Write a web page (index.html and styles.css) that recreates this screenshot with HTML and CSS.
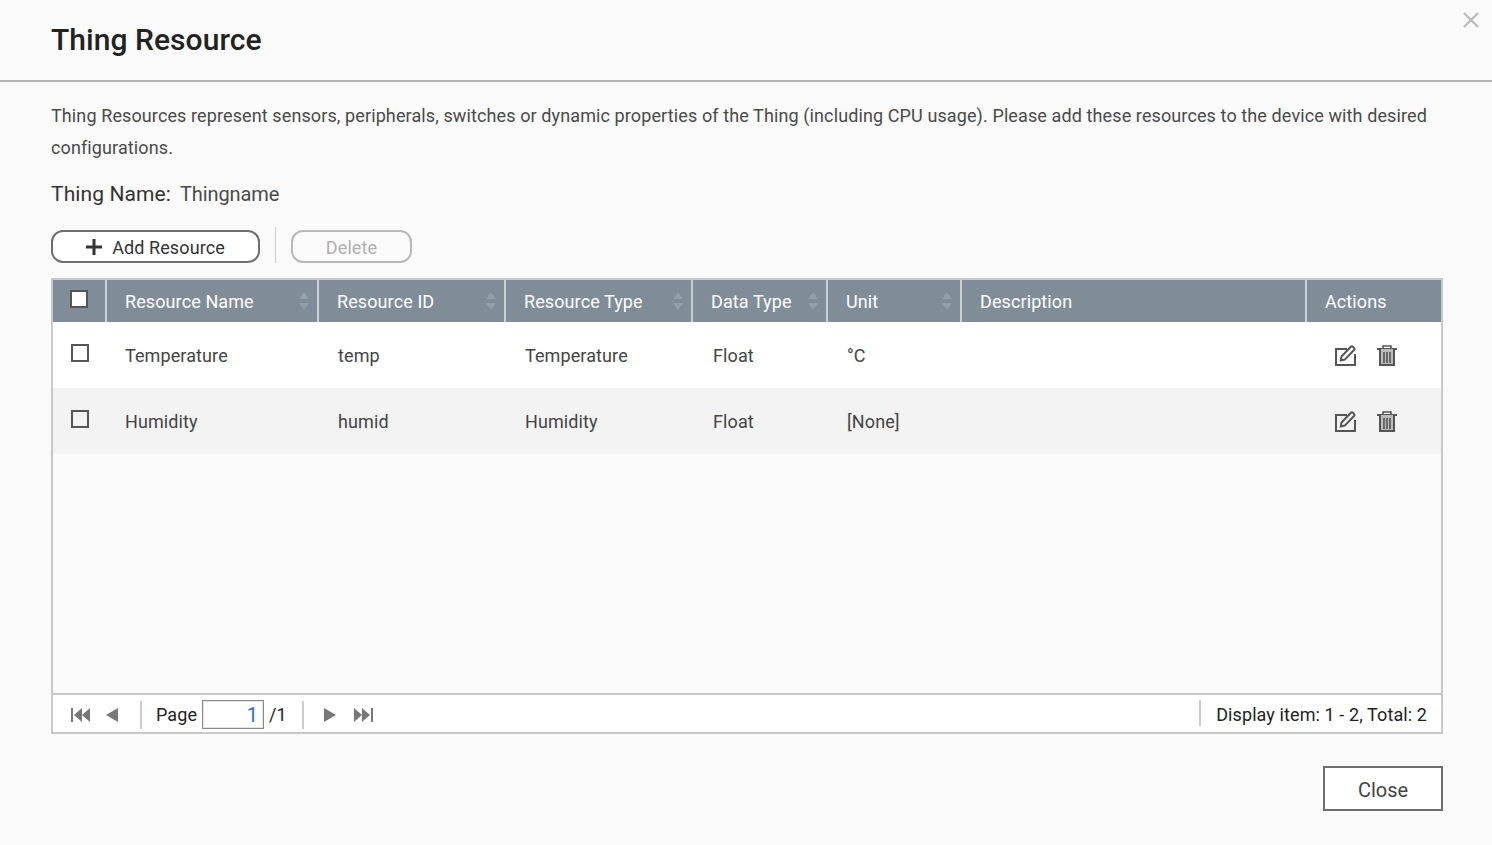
FILE: index.html
```html
<!DOCTYPE html>
<html lang="en">
<head>
<meta charset="utf-8">
<title>Thing Resource</title>
<link rel="stylesheet" href="styles.css">
</head>
<body>
<svg width="0" height="0" class="defs">
  <symbol id="i-edit" viewBox="0 0 21 21">
    <path d="M12 4H1v16h19V9" fill="none" stroke="#555" stroke-width="2"/>
    <path d="M6.500 11.500 15.800 1.800a1.500 1.500 0 0 1 2.100 0l1.100 1.100a1.500 1.500 0 0 1 0 2.100L9.800 14.600l-4 .8z" fill="none" stroke="#555" stroke-width="2"/>
  </symbol>
  <symbol id="i-trash" viewBox="0 0 20 21">
    <path d="M0 4h20" stroke="#555" stroke-width="2"/>
    <path d="M6 4V1h8v3" fill="none" stroke="#555" stroke-width="1.600"/>
    <path d="M3 4v16h14V4" fill="#bbb" stroke="#555" stroke-width="2"/>
    <path d="M7 7v11M10 7v11M13 7v11" stroke="#555" stroke-width="1.600"/>
  </symbol>
  <symbol id="i-up" viewBox="0 0 10 7"><path d="M5 0l5 7H0z" fill="#939fa9"/></symbol>
  <symbol id="i-down" viewBox="0 0 10 7"><path d="M0 0h10L5 7z" fill="#939fa9"/></symbol>
</svg>
<main class="dialog">
  <header class="head">
    <h1 class="title">Thing Resource</h1>
    <svg class="close-x" width="18" height="18" viewBox="0 0 18 18"><path d="M2 2l14 14M16 2L2 16" stroke="#bbb" stroke-width="2.400"/></svg>
  </header>
  <section class="content">
    <p class="intro">Thing Resources represent sensors, peripherals, switches or dynamic properties of the Thing (including CPU usage). Please add these resources to the device with desired configurations.</p>
    <div class="name-line"><span class="name-label">Thing Name:</span><span class="name-value">Thingname</span></div>
    <div class="toolbar">
      <button class="pill pill-add" type="button">
        <svg width="16" height="16" viewBox="0 0 16 16"><path d="M8 0v16M0 8h16" stroke="#333" stroke-width="3"/></svg>
        <span>Add Resource</span>
      </button>
      <span class="tool-sep"></span>
      <button class="pill pill-off" type="button">Delete</button>
    </div>
    <div class="grid-box">
      <div class="row row-head">
        <div class="cell cell-check"><span class="check check-head"></span></div>
        <div class="cell"><span>Resource Name</span><span class="sort"><svg width="10" height="7"><use href="#i-up"/></svg><svg width="10" height="7"><use href="#i-down"/></svg></span></div>
        <div class="cell"><span>Resource ID</span><span class="sort"><svg width="10" height="7"><use href="#i-up"/></svg><svg width="10" height="7"><use href="#i-down"/></svg></span></div>
        <div class="cell"><span>Resource Type</span><span class="sort"><svg width="10" height="7"><use href="#i-up"/></svg><svg width="10" height="7"><use href="#i-down"/></svg></span></div>
        <div class="cell"><span>Data Type</span><span class="sort"><svg width="10" height="7"><use href="#i-up"/></svg><svg width="10" height="7"><use href="#i-down"/></svg></span></div>
        <div class="cell"><span>Unit</span><span class="sort"><svg width="10" height="7"><use href="#i-up"/></svg><svg width="10" height="7"><use href="#i-down"/></svg></span></div>
        <div class="cell"><span>Description</span></div>
        <div class="cell cell-last"><span>Actions</span></div>
      </div>
      <div class="row row-body">
        <div class="cell cell-check"><span class="check"></span></div>
        <div class="cell">Temperature</div>
        <div class="cell">temp</div>
        <div class="cell">Temperature</div>
        <div class="cell">Float</div>
        <div class="cell">°C</div>
        <div class="cell"></div>
        <div class="cell cell-actions"><svg width="21" height="21"><use href="#i-edit"/></svg><svg width="20" height="21"><use href="#i-trash"/></svg></div>
      </div>
      <div class="row row-body row-alt">
        <div class="cell cell-check"><span class="check"></span></div>
        <div class="cell">Humidity</div>
        <div class="cell">humid</div>
        <div class="cell">Humidity</div>
        <div class="cell">Float</div>
        <div class="cell">[None]</div>
        <div class="cell"></div>
        <div class="cell cell-actions"><svg width="21" height="21"><use href="#i-edit"/></svg><svg width="20" height="21"><use href="#i-trash"/></svg></div>
      </div>
      <div class="grid-fill"></div>
      <footer class="pager">
        <svg class="pg-first" width="19" height="14" viewBox="0 0 19 14"><path d="M1 0v14" stroke="#777" stroke-width="2"/><path d="M11 0v14L3 7zM19 0v14l-8-7z" fill="#777"/></svg>
        <svg class="pg-prev" width="12" height="14" viewBox="0 0 12 14"><path d="M12 0v14L0 7z" fill="#777"/></svg>
        <span class="pg-sep pg-sep-a"></span>
        <span class="pg-label">Page</span>
        <span class="pg-input">1</span>
        <span class="pg-total">/1</span>
        <span class="pg-sep pg-sep-b"></span>
        <svg class="pg-next" width="12" height="14" viewBox="0 0 12 14"><path d="M0 0v14l12-7z" fill="#777"/></svg>
        <svg class="pg-last" width="19" height="14" viewBox="0 0 19 14"><path d="M18 0v14" stroke="#777" stroke-width="2"/><path d="M0 0v14l8-7zM8 0v14l8-7z" fill="#777"/></svg>
        <span class="pg-info">Display item: 1 - 2, Total: 2</span>
      </footer>
    </div>
    <div class="actions-bar"><button class="btn-close" type="button">Close</button></div>
  </section>
</main>
</body>
</html>
```
FILE: styles.css
```css
* { box-sizing: border-box; }
html, body { margin: 0; height: 100%; }
body {
  background: #fafafa;
  color: #333;
  font-family: Roboto, "Liberation Sans", sans-serif;
  font-size: 18px;
  letter-spacing: .1px;
  overflow: hidden;
}
.defs { position: absolute; }
.dialog { width: 1492px; height: 845px; display: flex; flex-direction: column; }
.head {
  position: relative;
  height: 82px;
  padding: 22px 51px 0;
  border-bottom: 2px solid #b3b3b3;
}
.title { margin: 0; font-size: 30px; line-height: 36px; font-weight: 500; color: #222; letter-spacing: .05px; }
.close-x { position: absolute; top: 11px; right: 12px; }
.content { padding: 18px 49px 0 51px; flex: 1; display: flex; flex-direction: column; }
.intro { margin: 0; font-size: 18px; line-height: 32px; color: #4a4a4a; width: 1392px; letter-spacing: .11px; }
.name-line { margin-top: 15px; height: 31px; line-height: 31px; font-size: 20px; color: #333; display: flex; }
.name-label { font-size: 21px; }
.name-value { margin-left: 9px; color: #4a4a4a; letter-spacing: -.1px; }
.toolbar { margin-top: 17px; height: 36px; display: flex; align-items: flex-start; }
.pill {
  height: 33px;
  margin-top: 3px;
  border-radius: 12px;
  background: #fff;
  font: 18px/1 Roboto, "Liberation Sans", sans-serif;
  letter-spacing: .1px;
  padding: 2px 0 0;
  display: flex;
  align-items: center;
  justify-content: center;
}
.pill-add { width: 209px; border: 2px solid #6e6e6e; color: #333; gap: 10px; }
.pill-add svg { margin-top: -2px; }
.pill-off { width: 121px; border: 2px solid #b8b8b8; color: #b0b0b0; background: #fafafa; }
.tool-sep { width: 1px; height: 36px; background: #ccc; margin: 0 15px; }
.grid-box {
  margin-top: 15px;
  width: 1392px;
  height: 456px;
  border: 2px solid #c8c8c8;
  display: flex;
  flex-direction: column;
}
.row { display: grid; grid-template-columns: 54px 212px 187px 187px 135px 134px 345px 134px; }
.row-head { height: 42px; background: #808d99; color: #fff; }
.row-head .cell { border-right: 2px solid #c8d0d6; padding: 0 8px 0 18px; justify-content: space-between; }
.row-head .cell-last { border-right: 0; }
.row-head .cell-check { padding: 0 0 4px 17px; justify-content: flex-start; }
.cell { display: flex; align-items: center; min-width: 0; }
.row-body { height: 66px; background: #fff; color: #444; }
.row-body .cell { padding-left: 19px; }
.row-body .cell:nth-child(2) { padding-left: 18px; }
.row-body .cell:nth-child(5) { padding-left: 20px; }
.row-body .cell-check { padding: 0 0 4px 18px; }
.row-alt { background: #f3f3f3; }
.row-body .cell-actions { padding-left: 28px; gap: 21px; }
.check { width: 18px; height: 18px; border: 2px solid #555; background: #fff; display: block; }
.row-body .check { background: transparent; }
.sort { display: flex; flex-direction: column; gap: 4px; }
.sort svg { display: block; }
.grid-fill { flex: 1; }
.pager {
  height: 39px;
  padding-top: 2px;
  border-top: 2px solid #c8c8c8;
  background: #fff;
  display: flex;
  align-items: center;
  color: #222;
}
.pg-first { margin-left: 18px; }
.pg-prev { margin-left: 16px; }
.pg-sep { width: 2px; height: 28px; background: #ccc; }
.pg-sep-a { margin-left: 22px; }
.pg-label { margin-left: 14px; }
.pg-input {
  margin-left: 5px;
  width: 62px;
  height: 29px;
  border: 1px solid #888;
  box-shadow: inset 0 0 0 1px #e4e4e4;
  text-align: right;
  padding-right: 5px;
  font-size: 20px;
  line-height: 29px;
  color: #2a6fd0;
}
.pg-total { margin-left: 5px; width: 33px; letter-spacing: 0; }
.pg-next { margin-left: 20px; }
.pg-last { margin-left: 18px; }
.pg-info {
  margin-left: auto;
  margin-right: 14px;
  margin-bottom: 4px;
  padding-left: 15px;
  border-left: 2px solid #ccc;
  height: 26px;
  line-height: 30px;
}
.actions-bar { width: 1392px; margin-top: 32px; display: flex; justify-content: flex-end; }
.btn-close {
  width: 120px;
  height: 45px;
  border: 2px solid #6e6e6e;
  background: #fff;
  color: #444;
  font: 20px Roboto, "Liberation Sans", sans-serif;
  padding: 2px 0 0;
}
```
